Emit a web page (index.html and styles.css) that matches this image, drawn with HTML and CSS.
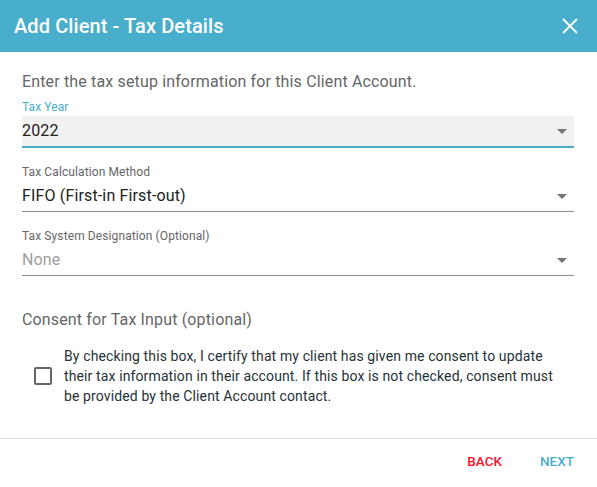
FILE: index.html
```html
<!DOCTYPE html>
<html lang="en">
	<head>
		<meta charset="UTF-8">
		<meta name="viewport" content="width=device-width, initial-scale=1.0">
		<title>Add Client - Tax Details</title>
		<link rel="stylesheet" href="styles.css">
	</head>
    <body>
        <section class="dialog">
            <header class="dialog_head">
                <h1>Add Client - Tax Details</h1>
                <button type="button" class="close">
                    <svg width="24" height="24" viewBox="0 0 24 24">
                        <path d="M5 5L19 19M19 5L5 19" stroke="#fff" stroke-width="1.8" fill="none"/>
                    </svg>
                    <span class="sr_only">Close</span>
                </button>
            </header>
            <div class="dialog_body">
                <p class="intro">Enter the tax setup information for this Client Account.</p>

                <div class="field focused">
                    <label>Tax Year</label>
                    <div class="select"><span>2022</span><i class="arrow"></i></div>
                </div>
                <div class="field">
                    <label>Tax Calculation Method</label>
                    <div class="select"><span>FIFO (First-in First-out)</span><i class="arrow"></i></div>
                </div>
                <div class="field">
                    <label>Tax System Designation (Optional)</label>
                    <div class="select empty"><span>None</span><i class="arrow"></i></div>
                </div>

                <h2 class="consent_title">Consent for Tax Input (optional)</h2>
                <div class="consent">
                    <span class="checkbox"></span>
                    <p>By checking this box, I certify that my client has given me consent to update their tax information in their account. If this box is not checked, consent must be provided by the Client Account contact.</p>
                </div>
            </div>
            <footer class="dialog_foot">
                <button type="button" class="btn back">Back</button>
                <button type="button" class="btn next">Next</button>
            </footer>
        </section>
    </body>
</html>
```

FILE: styles.css
```css
body{padding:0; margin:0; background:#fff;}
.dialog{
    width:597px; height:487px;
    font-family:Roboto, "Liberation Sans", sans-serif;
}
.dialog_head{
    height:52px; background:#48aecc; color:#fff;
    display:flex; align-items:center; justify-content:space-between;
    padding:0 15px 0 14px;
}
.dialog_head h1{margin:0; font-size:20px; font-weight:500; letter-spacing:0.1px;}
.close{border:0; background:transparent; padding:0; margin:0; height:24px; cursor:pointer;}
.sr_only{
    display:block; width:0; height:0; font-size:0; overflow:hidden;
    position:absolute; visibility:hidden;
}
.dialog_body{padding:18px 23px 0 22px;}
.intro{margin:0 0 6px; font-size:16px; line-height:24px; color:#666; letter-spacing:0.15px;}

.field{margin-bottom:17px;}
.field label{display:block; font-size:12px; line-height:14px; color:#666; letter-spacing:0.1px;}
.select{
    margin-top:2px; height:30px; line-height:30px;
    display:flex; align-items:center; justify-content:space-between;
    font-size:16px; color:#212121; letter-spacing:0.15px;
    border-bottom:1px solid #8a8a8a;
}
.select.empty{color:#9e9e9e;}
.arrow{
    width:0; height:0; margin-right:7px;
    border-left:5px solid transparent; border-right:5px solid transparent;
    border-top:5px solid #757575;
}
.field.focused label{color:#48aecc;}
.field.focused .select{background:#f1f1f1; border-bottom:2px solid #48aecc;}

.consent_title{
    margin:32px 0 14px; font-size:16px; line-height:24px;
    font-weight:400; color:#666; letter-spacing:0.15px;
}
.consent{display:flex; align-items:center; gap:12px; padding:0 12px;}
.checkbox{
    flex:none; width:14px; height:14px;
    border:2px solid #666; border-radius:2px;
}
.consent p{margin:0; font-size:14px; line-height:20px; color:#263238; letter-spacing:0.12px;}

.dialog_foot{
    margin-top:32px; border-top:1px solid #e0e0e0;
    display:flex; justify-content:flex-end; gap:38px;
    padding:4px 23px 0;
}
.btn{
    height:36px; border:0; background:transparent; padding:0;
    font-family:inherit; font-size:13.5px; font-weight:500;
    text-transform:uppercase; cursor:pointer;
}
.back{color:#fa0f2d;}
.next{color:#48aecc;}
```
